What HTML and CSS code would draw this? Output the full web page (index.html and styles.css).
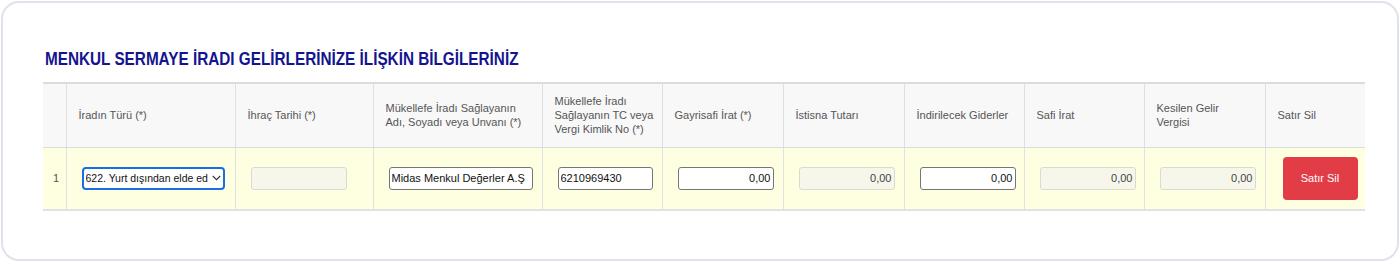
FILE: index.html
```html
<!DOCTYPE html>
<html lang="tr">
<head>
<meta charset="utf-8">
<title>Menkul Sermaye İradı</title>
<link rel="stylesheet" href="styles.css">
</head>
<body>
<div class="card">
  <h2 class="title"><span class="title-text">MENKUL SERMAYE İRADI GELİRLERİNİZE İLİŞKİN BİLGİLERİNİZ</span></h2>
  <table class="grid">
    <colgroup>
      <col class="c-no"><col class="c-tur"><col class="c-tarih"><col class="c-ad"><col class="c-tc">
      <col class="c-121"><col class="c-121"><col class="c-120"><col class="c-120"><col class="c-121"><col class="c-sil">
    </colgroup>
    <thead>
      <tr>
        <th></th>
        <th>İradın Türü (*)</th>
        <th>İhraç Tarihi (*)</th>
        <th>Mükellefe İradı Sağlayanın Adı, Soyadı veya Unvanı (*)</th>
        <th class="th-tc">Mükellefe İradı Sağlayanın TC veya Vergi Kimlik No (*)</th>
        <th>Gayrisafi İrat (*)</th>
        <th>İstisna Tutarı</th>
        <th>İndirilecek Giderler</th>
        <th>Safi İrat</th>
        <th>Kesilen Gelir Vergisi</th>
        <th>Satır Sil</th>
      </tr>
    </thead>
    <tbody>
      <tr>
        <td class="no">1</td>
        <td><div class="select"><span class="sel-text">622. Yurt dışından elde ed</span><svg class="chev" width="9" height="6" viewBox="0 0 9 6"><path d="M0.8 1l3.7 3.7 3.7-3.7" fill="none" stroke="#333" stroke-width="1.1"/></svg></div></td>
        <td><input class="inp w96 dis" type="text" disabled></td>
        <td><input class="inp w144" type="text" value="Midas Menkul Değerler A.Ş"></td>
        <td><input class="inp w95" type="text" value="6210969430"></td>
        <td><input class="inp w96 num" type="text" value="0,00"></td>
        <td><input class="inp w96 num dis" type="text" value="0,00" disabled></td>
        <td><input class="inp w96 num" type="text" value="0,00"></td>
        <td><input class="inp w96 num dis" type="text" value="0,00" disabled></td>
        <td><input class="inp w96 num dis" type="text" value="0,00" disabled></td>
        <td class="sil"><button class="btn-sil" type="button">Satır Sil</button></td>
      </tr>
    </tbody>
  </table>
</div>
</body>
</html>
```
FILE: styles.css
```css
html, body {
  margin: 0;
  padding: 0;
  background: #ffffff;
}
body {
  padding: 1px;
  font-family: "Liberation Sans", Arial, sans-serif;
}
.card {
  box-sizing: border-box;
  height: 260px;
  border: 2px solid #dfe2ea;
  border-radius: 18px;
  padding: 46px 30px 0 40px;
  background: #fff;
}
.title {
  margin: 0 0 13px 2px;
  font-size: 18px;
  line-height: 20px;
  font-weight: bold;
  color: #14148f;
  white-space: nowrap;
}
.title-text {
  display: inline-block;
  transform: scaleX(0.85);
  transform-origin: left center;
}
.grid {
  width: 1322px;
  border-collapse: collapse;
  table-layout: fixed;
}
.c-no { width: 23px; }
.c-tur { width: 169px; }
.c-tarih { width: 138px; }
.c-ad { width: 169px; }
.c-tc { width: 120px; }
.c-121 { width: 121px; }
.c-120 { width: 120px; }
.c-sil { width: 100px; }
.grid thead tr { height: 64px; }
.grid tbody tr { height: 63px; }
.grid th {
  background: #f8f8f8;
  padding: 0 12px 0 12px;
  text-align: left;
  vertical-align: middle;
  font-weight: normal;
  font-size: 11px;
  line-height: 14px;
  color: #555;
  border-top: 2px solid #dcdcdc;
  border-left: 1px solid #e0e0e0;
  border-bottom: 1px solid #dcdcdc;
}
.grid th.th-tc {
  padding-right: 6px;
}
.grid td {
  background: #fefee0;
  padding: 0 6px 0 14px;
  vertical-align: middle;
  border-left: 1px solid #e0e0e0;
  border-bottom: 2px solid #e2e2e2;
}
.grid th:first-child, .grid td:first-child {
  border-left: none;
}
.grid td.no {
  padding: 0 0 0 10px;
  font-size: 11px;
  color: #555;
}
.select {
  box-sizing: border-box;
  width: 143px;
  height: 23px;
  border: 2px solid #1a6fe0;
  border-radius: 4px;
  background: #fff;
  display: flex;
  align-items: center;
  justify-content: space-between;
  padding: 0 2px 0 2px;
  margin-left: 1px;
}
.sel-text {
  font-size: 10.5px;
  color: #111;
  white-space: nowrap;
  overflow: hidden;
}
.chev { flex: none; margin-left: 2px; }
.inp {
  box-sizing: border-box;
  height: 23px;
  margin: 0 0 0 1px;
  border: 1px solid #767676;
  border-radius: 3px;
  background: #fff;
  font-family: "Liberation Sans", Arial, sans-serif;
  font-size: 11px;
  color: #111;
  padding: 0 2px;
}
.w96 { width: 96px; }
.w95 { width: 95px; }
.w144 { width: 144px; }
.num { text-align: right; }
.inp.dis {
  background: #f6f6ea;
  border-color: #dadad0;
  color: #444;
}
.grid td.sil {
  padding: 0 0 0 17px;
}
.btn-sil {
  display: block;
  width: 75px;
  height: 43px;
  border: none;
  border-radius: 4px;
  background: #e23d47;
  color: #fff;
  font-family: "Liberation Sans", Arial, sans-serif;
  font-size: 11px;
}
```
